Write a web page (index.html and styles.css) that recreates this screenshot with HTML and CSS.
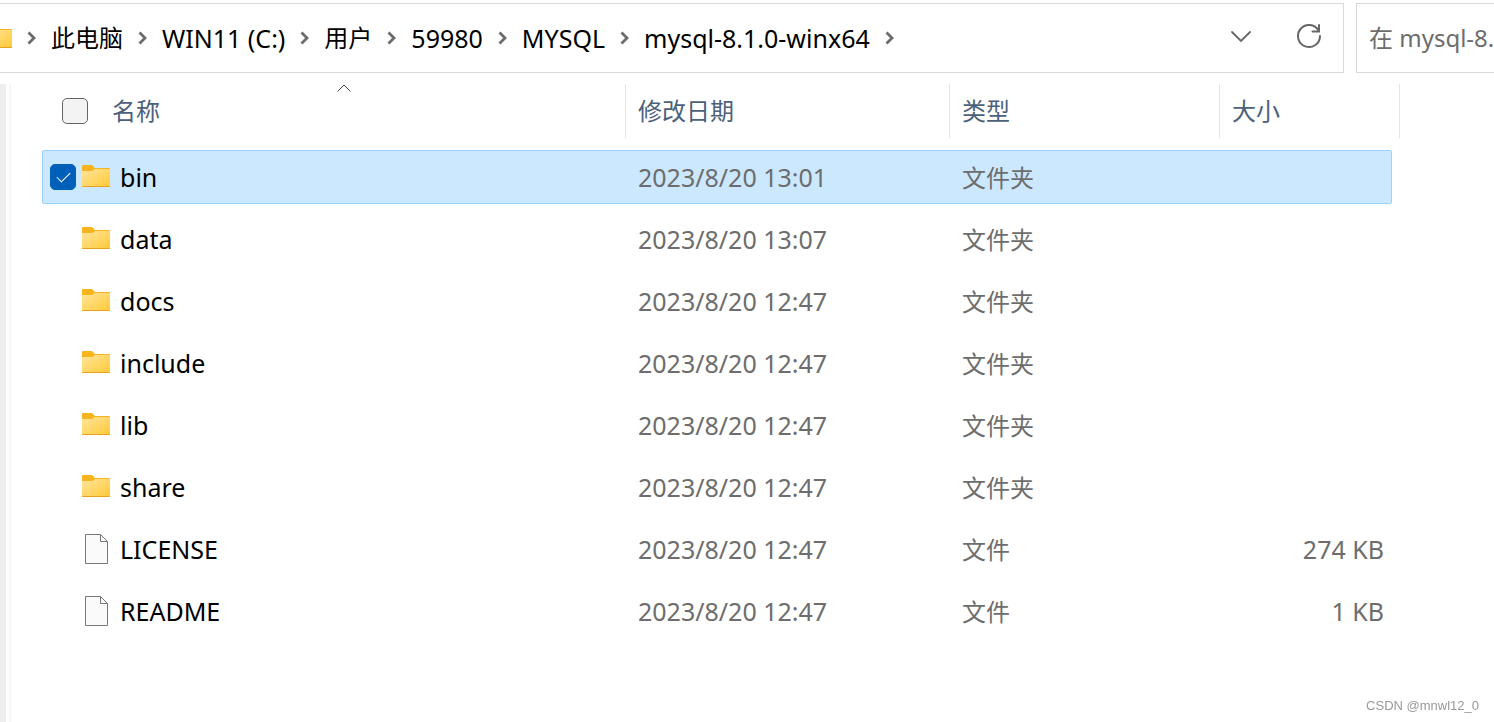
FILE: index.html
```html
<!DOCTYPE html>
<html lang="zh-CN">

<head>
  <meta charset="UTF-8"/>
  <title>mysql-8.1.0-winx64</title>
  <link rel="stylesheet" href="styles.css">
</head>

<body>
  <!-- shared icons -->
  <svg class="defs" width="0" height="0" aria-hidden="true">
    <defs>
      <linearGradient id="folderfill" x1="0" y1="0" x2="1" y2="1">
        <stop offset="0" stop-color="#ffe59c"/>
        <stop offset="1" stop-color="#ffc937"/>
      </linearGradient>
      <symbol id="folder" viewBox="0 0 32 32">
        <path d="M2 5q0-1 1-1h9l3 3h14q1 0 1 1v4H2z" fill="#f8b41c"/>
        <path d="M2 10h10l3-2h15v17q0 1-1 1H3q-1 0-1-1z" fill="url(#folderfill)"/>
        <path d="M2 25h28q0 1-1 1H3q-1 0-1-1z" fill="#e9a21b"/>
      </symbol>
      <symbol id="file" viewBox="0 0 32 32">
        <path d="M5.5 1.5h15l7 7v22h-22z" fill="#fafafa" stroke="#777"/>
        <path d="M20.5 1.5v7h7" fill="none" stroke="#777"/>
      </symbol>
      <symbol id="chevron" viewBox="0 0 9 14">
        <path d="M1.500 1.500l5.500 5.500-5.500 5.500" fill="none" stroke="#6b6b6b" stroke-width="2.800"/>
      </symbol>
    </defs>
  </svg>

  <header class="topbar">
    <div class="address">
      <nav class="crumbs" aria-label="路径">
        <svg class="icon crumb-icon"><use href="#folder"/></svg>
        <svg class="chevron"><use href="#chevron"/></svg>
        <a href="#">此电脑</a>
        <svg class="chevron"><use href="#chevron"/></svg>
        <a class="latin" href="#">WIN11 (C:)</a>
        <svg class="chevron"><use href="#chevron"/></svg>
        <a href="#">用户</a>
        <svg class="chevron"><use href="#chevron"/></svg>
        <a class="latin" href="#">59980</a>
        <svg class="chevron"><use href="#chevron"/></svg>
        <a class="latin" href="#">MYSQL</a>
        <svg class="chevron"><use href="#chevron"/></svg>
        <a class="latin" href="#">mysql-8.1.0-winx64</a>
        <svg class="chevron"><use href="#chevron"/></svg>
      </nav>
      <button class="toolbutton" type="button" aria-label="以前的位置">
        <svg width="28" height="28" viewBox="0 0 28 28">
          <path d="M5 10l9 9 9-9" fill="none" stroke="#666" stroke-width="1.800" stroke-linecap="round"/>
        </svg>
      </button>
      <button class="toolbutton" type="button" aria-label="刷新">
        <svg width="28" height="28" viewBox="0 0 28 28">
          <path d="M23.500 8.500A11 11 0 1 0 25 14" fill="none" stroke="#666" stroke-width="2" stroke-linecap="round"/>
          <path d="M24 3v6.500h-6.500" fill="none" stroke="#666" stroke-width="2" stroke-linecap="round"/>
        </svg>
      </button>
    </div>
    <input class="search" type="text" aria-label="搜索" placeholder="在 mysql-8.1.0-winx64 中搜索">
  </header>

  <main class="content">
    <div class="scrollstrip"></div>
    <div class="splitter"></div>
    <div class="listing">
      <table class="files">
        <colgroup>
          <col class="col-name">
          <col class="col-date">
          <col class="col-type">
          <col class="col-size">
          <col class="col-edge">
        </colgroup>
        <thead>
          <tr>
            <th>
              <div class="head head-name">
                <input class="check" type="checkbox" id="checkall">
                <label for="checkall">名称</label>
                <svg class="sortmark" width="14" height="8" viewBox="0 0 14 8">
                  <path d="M.5 7.500l6.500-6.500 6.500 6.500" fill="none" stroke="#444"/>
                </svg>
              </div>
            </th>
            <th><div class="head">修改日期</div></th>
            <th><div class="head">类型</div></th>
            <th colspan="2"><div class="head">大小</div></th>
          </tr>
        </thead>
        <tbody>
          <tr class="selected">
            <td><div class="name"><input class="check" type="checkbox" id="f1" checked><svg class="icon"><use href="#folder"/></svg><label for="f1">bin</label></div></td>
            <td class="latin">2023/8/20 13:01</td>
            <td class="type">文件夹</td>
            <td></td>
            <td></td>
          </tr>
          <tr>
            <td><div class="name"><input class="check" type="checkbox" id="f2"><svg class="icon"><use href="#folder"/></svg><label for="f2">data</label></div></td>
            <td class="latin">2023/8/20 13:07</td>
            <td class="type">文件夹</td>
            <td></td>
            <td></td>
          </tr>
          <tr>
            <td><div class="name"><input class="check" type="checkbox" id="f3"><svg class="icon"><use href="#folder"/></svg><label for="f3">docs</label></div></td>
            <td class="latin">2023/8/20 12:47</td>
            <td class="type">文件夹</td>
            <td></td>
            <td></td>
          </tr>
          <tr>
            <td><div class="name"><input class="check" type="checkbox" id="f4"><svg class="icon"><use href="#folder"/></svg><label for="f4">include</label></div></td>
            <td class="latin">2023/8/20 12:47</td>
            <td class="type">文件夹</td>
            <td></td>
            <td></td>
          </tr>
          <tr>
            <td><div class="name"><input class="check" type="checkbox" id="f5"><svg class="icon"><use href="#folder"/></svg><label for="f5">lib</label></div></td>
            <td class="latin">2023/8/20 12:47</td>
            <td class="type">文件夹</td>
            <td></td>
            <td></td>
          </tr>
          <tr>
            <td><div class="name"><input class="check" type="checkbox" id="f6"><svg class="icon"><use href="#folder"/></svg><label for="f6">share</label></div></td>
            <td class="latin">2023/8/20 12:47</td>
            <td class="type">文件夹</td>
            <td></td>
            <td></td>
          </tr>
          <tr>
            <td><div class="name"><input class="check" type="checkbox" id="f7"><svg class="icon"><use href="#file"/></svg><label for="f7">LICENSE</label></div></td>
            <td class="latin">2023/8/20 12:47</td>
            <td class="type">文件</td>
            <td class="latin size">274 KB</td>
            <td></td>
          </tr>
          <tr>
            <td><div class="name"><input class="check" type="checkbox" id="f8"><svg class="icon"><use href="#file"/></svg><label for="f8">README</label></div></td>
            <td class="latin">2023/8/20 12:47</td>
            <td class="type">文件</td>
            <td class="latin size">1 KB</td>
            <td></td>
          </tr>
        </tbody>
      </table>
    </div>
  </main>

  <div class="watermark">CSDN @mnwl12_0</div>
</body>

</html>
```
FILE: styles.css
```css
* {
  box-sizing: border-box;
}
html, body {
  height: 100%;
  margin: 0;
}
body {
  display: flex;
  flex-direction: column;
  overflow: hidden;
  background-color: #fff;
  color: #000;
  font-family: "Noto Sans", "Noto Sans CJK SC", sans-serif;
  font-size: 24px;
  line-height: 34px;
}
.defs {
  position: absolute;
}
.latin {
  font-size: 25px;
}
.icon {
  width: 32px;
  height: 32px;
  flex: none;
}

/* address bar and search box */
.topbar {
  display: flex;
  flex: none;
  gap: 12px;
  height: 70px;
  margin-top: 3px;
}
.address {
  display: flex;
  flex: 1;
  align-items: center;
  gap: 28px;
  min-width: 0;
  padding-right: 14px;
  border: 1px solid #d9d9d9;
  border-left: 0;
  overflow: hidden;
}
.crumbs {
  display: flex;
  flex: 1;
  align-items: center;
  gap: 15px;
  white-space: nowrap;
}
.crumbs a {
  color: #000;
  text-decoration: none;
}
.crumb-icon {
  margin-left: -18px;
  margin-right: -2px;
}
.chevron {
  flex: none;
  width: 9px;
  height: 14px;
}
.toolbutton {
  display: flex;
  align-items: center;
  justify-content: center;
  width: 40px;
  height: 40px;
  padding: 0 0 4px;
  border: 0;
  background: none;
}
.search {
  width: 138px;
  padding: 0 0 0 12px;
  border: 1px solid #d9d9d9;
  border-right: 0;
  border-radius: 0;
  outline: 0;
  background: #fff;
  font: inherit;
}
.search::placeholder {
  color: #6d6d6d;
  opacity: 1;
}

/* file list */
.content {
  display: flex;
  flex: 1;
  min-height: 0;
  padding-top: 11px;
}
.scrollstrip {
  width: 6px;
  background-color: #eee;
}
.splitter {
  width: 2px;
  margin-left: 3px;
  background-color: #f7f7f7;
}
.listing {
  flex: 1;
  min-width: 0;
  padding: 0 94px 0 31px;
}
.files {
  width: 100%;
  table-layout: fixed;
  border-collapse: separate;
  border-spacing: 0;
  color: #6d6d6d;
}
.col-date {
  width: 324px;
}
.col-type {
  width: 270px;
}
.col-size {
  width: 172px;
}
.col-edge {
  width: 8px;
}
.files th {
  padding: 0 0 12px;
  color: #4c607a;
  font-weight: normal;
  text-align: left;
}
.head {
  display: flex;
  align-items: center;
  height: 54px;
  padding-left: 12px;
  border-right: 1px solid #e5e5e5;
}
.head-name {
  position: relative;
  gap: 24px;
  margin-left: 20px;
  padding-left: 0;
}
.sortmark {
  position: absolute;
  top: 0;
  left: calc(50% - 7px);
}
.files td {
  height: 62px;
  padding: 0 0 8px 12px;
}
.files td:first-child {
  padding-left: 8px;
}
.files td:last-child {
  padding-left: 0;
}
.files .type {
  padding-bottom: 6px;
}
.files .size {
  padding-right: 8px;
  text-align: right;
}
.name {
  display: flex;
  align-items: center;
  color: #000;
  font-size: 25px;
}
.name label {
  margin-left: 8px;
}
.name .check {
  margin-right: 4px;
  visibility: hidden;
}
.name .check:checked {
  visibility: visible;
}
/* highlight spans the row but leaves the gap under it */
.selected {
  position: relative;
}
.selected td:first-child::before {
  content: "";
  position: absolute;
  z-index: -1;
  top: 0;
  bottom: 8px;
  left: 0;
  right: 8px;
  border: 1px solid #99d1ff;
  border-radius: 2px;
  background-color: #cce8ff;
}

.check {
  display: grid;
  place-items: center;
  flex: none;
  width: 26px;
  height: 26px;
  margin: 0;
  border: 1px solid #666;
  border-radius: 5px;
  background-color: #f3f3f3;
  appearance: none;
}
.check:checked {
  border-color: #005fb8;
  background-color: #005fb8;
}
.check:checked::before {
  content: "";
  width: 6px;
  height: 12px;
  margin-bottom: 4px;
  border: solid #fff;
  border-width: 0 1px 1px 0;
  transform: rotate(45deg);
}

.watermark {
  position: fixed;
  right: 15px;
  bottom: 6px;
  color: #999;
  font: 13px/20px "Liberation Sans", sans-serif;
}
```
